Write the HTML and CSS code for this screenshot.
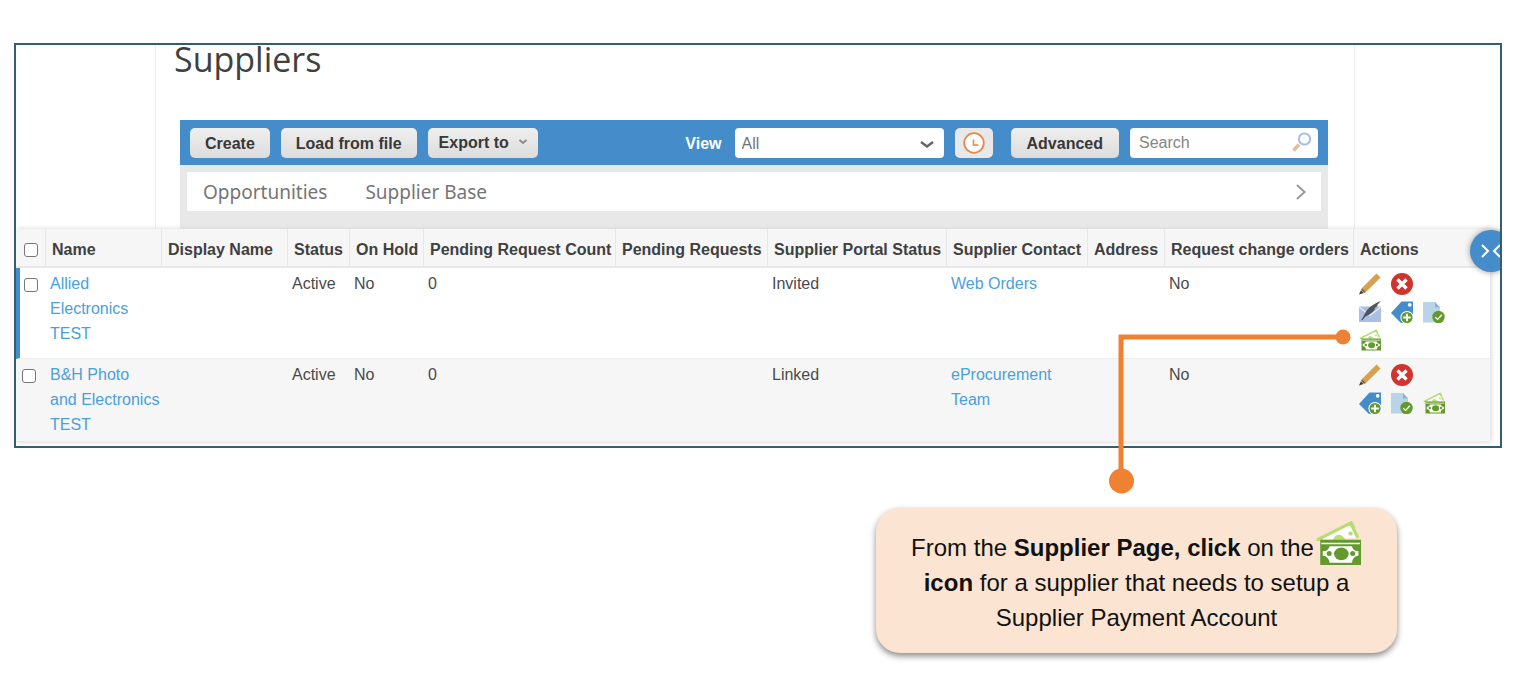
FILE: index.html
```html
<!DOCTYPE html>
<html lang="en">
<head>
<meta charset="utf-8">
<title>Suppliers</title>
<link rel="stylesheet" href="styles.css">
</head>
<body>
<svg class="defs" aria-hidden="true">
  <symbol id="pencil" viewBox="0 0 22 22">
    <path d="M17.5 0.5 21.6 4.6 7 19 3 15Z" fill="#d6a04e"/>
    <path d="M3 15 7 19 0 21.6Z" fill="#e3cfa4"/>
    <path d="M1.8 17.4 4.6 20 0 21.6Z" fill="#4a3d28"/>
    <path d="M3 15 7 19 5 19.8 2.2 17Z" fill="#7c6236"/>
  </symbol>
  <symbol id="remove" viewBox="0 0 22 22">
    <circle cx="11" cy="11" r="11" fill="#d0342c"/>
    <path d="M6.5 6.5 15.5 15.5M15.5 6.5 6.5 15.5" stroke="#fff" stroke-width="3.4" fill="none"/>
  </symbol>
  <symbol id="invite" viewBox="0 0 22 22">
    <path d="M0 5.5H22V21H0Z" fill="#a9bfe3"/>
    <path d="M0 6 11 14.5 22 6" stroke="#e4ecf8" stroke-width="1.3" fill="none"/>
    <path d="M22 0C15 2.500 8 7 5.500 13.500L2 19.500 3.500 19 6.500 15.500C11 13.500 14 11 16.500 7.500L15 7.800 19 4.500 18 4.200Z" fill="#50535a"/>
  </symbol>
  <symbol id="tag" viewBox="0 0 22 22">
    <path d="M0 12 10.5 0.5H22V14L12 22H10Z" fill="#448dca"/>
    <circle cx="18.7" cy="3.8" r="1.9" fill="#fff"/>
    <circle cx="16" cy="16.5" r="6.6" fill="#fff"/>
    <circle cx="16" cy="16.5" r="5.6" fill="#639a2b"/>
    <path d="M16 12.7V20.3M12.2 16.5H19.8" stroke="#fff" stroke-width="1.8"/>
  </symbol>
  <symbol id="approve" viewBox="0 0 22 22">
    <path d="M0 1H12L17 6.5V21.5H0Z" fill="#b9d4e7"/>
    <path d="M12 1 17 6.5H12Z" fill="#8fb0ca"/>
    <circle cx="15.5" cy="16" r="6.2" fill="#639a2b"/>
    <path d="M12.2 16.2 14.7 18.4 18.8 13.7" stroke="#fff" stroke-width="1.3" fill="none"/>
  </symbol>
  <symbol id="money" viewBox="0 0 22 22">
    <path d="M1 9.5 17 1.5 20.5 8.5" fill="#fff" stroke="#b6dc75" stroke-width="1.5"/>
    <path d="M0 9.8 3.6 8 3.6 10ZM14.5 2 17.7 0.5 19.5 4Z" fill="#b6dc75"/>
    <path d="M8.5 9.5Q11 4.5 14.8 9.5Z" fill="#b6dc75"/>
    <circle cx="17" cy="6.5" r="1" fill="#b6dc75"/>
    <path d="M2.5 9.5H22V21.5H2.5Z" fill="#639a2b"/>
    <path d="M7 12.5H17.7Q18 14.8 20.8 15V17Q18 17.3 17.7 20.5H7Q6.5 17.3 3.7 17V15Q6.5 14.8 7 12.5Z" fill="#fff"/>
    <path d="M3 11.2H21.5" stroke="#fff" stroke-width="0.7"/>
    <ellipse cx="12.6" cy="16.2" rx="3.5" ry="3" fill="#639a2b"/>
    <circle cx="6.8" cy="16" r="1.2" fill="#639a2b"/>
    <circle cx="18" cy="16" r="1.2" fill="#639a2b"/>
  </symbol>
</svg>
<main class="stage">
  <section class="frame">
    <div class="page">
      <h1 class="title">Suppliers</h1>
      <div class="toolbar">
        <button class="btn" type="button">Create</button>
        <button class="btn" type="button">Load from file</button>
        <button class="btn btn-menu" type="button">Export to
          <svg width="8" height="6" viewBox="0 0 8 6"><path d="M0.5 1 4 4 7.5 1" fill="none" stroke="#888" stroke-width="1.8"/></svg>
        </button>
        <div class="filters">
          <label class="view-label" for="view">View</label>
          <span class="select-wrap">
            <select id="view" class="field view"><option>All</option></select>
            <svg class="caret" width="14" height="8" viewBox="0 0 14 8"><path d="M1 1 7 5.5 13 1" fill="none" stroke="#666" stroke-width="2.4"/></svg>
          </span>
          <button class="btn btn-clock" type="button" aria-label="Recent">
            <svg width="22" height="22" viewBox="0 0 22 22"><circle cx="11" cy="11" r="9.8" fill="#fff" stroke="#e8884c" stroke-width="1.8"/><path d="M10.5 7.500V13H15.500" fill="none" stroke="#e8884c" stroke-width="1.6"/></svg>
          </button>
          <button class="btn btn-advanced" type="button">Advanced</button>
          <span class="search-wrap">
            <input class="field search" type="text" placeholder="Search" aria-label="Search">
            <svg class="lens" width="20" height="20" viewBox="0 0 20 20"><path d="M1.5 18.5 7 12.5" stroke="#dfbf98" stroke-width="3.6"/><circle cx="12.5" cy="7" r="5.6" fill="#fff" stroke="#a5bfe3" stroke-width="2"/></svg>
          </span>
        </div>
      </div>
      <div class="panel">
        <nav class="tabs">
          <a class="tab" href="#opportunities">Opportunities</a>
          <a class="tab" href="#supplier-base">Supplier Base</a>
          <button class="next" type="button" aria-label="Next">
            <svg width="10" height="16" viewBox="0 0 10 16"><path d="M1 1 8.5 8 1 15" fill="none" stroke="#999" stroke-width="2"/></svg>
          </button>
        </nav>
      </div>
    </div>
    <div class="table-area">
      <table class="grid">
        <colgroup>
          <col class="c-check"><col class="c-name"><col class="c-display"><col class="c-status"><col class="c-hold"><col class="c-count"><col class="c-pending"><col class="c-portal"><col class="c-contact"><col class="c-address"><col class="c-request"><col class="c-actions">
        </colgroup>
        <thead>
          <tr>
            <th><input class="box" type="checkbox" aria-label="Select all"></th>
            <th>Name</th><th>Display Name</th><th>Status</th><th>On Hold</th><th>Pending Request Count</th><th>Pending Requests</th><th>Supplier Portal Status</th><th>Supplier Contact</th><th>Address</th><th>Request change orders</th><th>Actions</th>
          </tr>
        </thead>
        <tbody>
          <tr class="selected">
            <td><input class="box" type="checkbox" aria-label="Select Allied Electronics TEST"></td>
            <td><a href="#allied">Allied<br>Electronics<br>TEST</a></td>
            <td></td><td>Active</td><td>No</td><td>0</td><td></td><td>Invited</td>
            <td><a href="#web-orders">Web Orders</a></td><td></td><td>No</td>
            <td>
              <div class="actions">
                <button class="icon" type="button" aria-label="Edit"><svg><use href="#pencil"/></svg></button>
                <button class="icon" type="button" aria-label="Remove"><svg><use href="#remove"/></svg></button>
                <span class="break"></span>
                <button class="icon" type="button" aria-label="Invite"><svg><use href="#invite"/></svg></button>
                <button class="icon" type="button" aria-label="Add tag"><svg><use href="#tag"/></svg></button>
                <button class="icon" type="button" aria-label="Approve"><svg><use href="#approve"/></svg></button>
                <button class="icon" type="button" aria-label="Payment account"><svg><use href="#money"/></svg></button>
              </div>
            </td>
          </tr>
          <tr class="striped">
            <td><input class="box" type="checkbox" aria-label="Select B&amp;H Photo and Electronics TEST"></td>
            <td><a href="#bh">B&amp;H Photo<br>and Electronics<br>TEST</a></td>
            <td></td><td>Active</td><td>No</td><td>0</td><td></td><td>Linked</td>
            <td><a href="#team">eProcurement<br>Team</a></td><td></td><td>No</td>
            <td>
              <div class="actions">
                <button class="icon" type="button" aria-label="Edit"><svg><use href="#pencil"/></svg></button>
                <button class="icon" type="button" aria-label="Remove"><svg><use href="#remove"/></svg></button>
                <span class="break"></span>
                <button class="icon" type="button" aria-label="Add tag"><svg><use href="#tag"/></svg></button>
                <button class="icon" type="button" aria-label="Approve"><svg><use href="#approve"/></svg></button>
                <button class="icon" type="button" aria-label="Payment account"><svg><use href="#money"/></svg></button>
              </div>
            </td>
          </tr>
        </tbody>
      </table>
      <button class="collapse" type="button" aria-label="Collapse table">
        <svg width="20" height="14" viewBox="0 0 20 14"><path d="M1 1 7 7 1 13M19 1 13 7 19 13" fill="none" stroke="#fff" stroke-width="2"/></svg>
      </button>
    </div>
  </section>
  <svg class="connector" width="242" height="166" viewBox="0 0 242 166">
    <path d="M234 9H12V154" fill="none" stroke="#ef8132" stroke-width="5"/>
    <circle cx="234" cy="9" r="7.5" fill="#ef8132"/>
    <circle cx="12.5" cy="153" r="12.5" fill="#ef8132"/>
  </svg>
  <p class="callout">From the <b>Supplier Page, click</b> on the<svg class="money-inline"><use href="#money"/></svg><br><b>icon</b> for a supplier that needs to setup a<br>Supplier Payment Account</p>
</main>
</body>
</html>
```

FILE: styles.css
```css
* { box-sizing: border-box; }

body {
  margin: 0;
  background: #fff;
  color: #4a4a4a;
  font: 16px/25px "Liberation Sans", Arial, sans-serif;
}

button, input, select { font: inherit; margin: 0; }
button { border: 0; padding: 0; cursor: pointer; }
a { color: #4a9fdc; text-decoration: none; }
.defs { position: absolute; width: 0; height: 0; }

.stage {
  position: relative;
  display: flex;
  flex-direction: column;
  padding: 43px 28px 40px 14px;
}

.frame {
  border: 2px solid #355d72;
  overflow: hidden;
  padding-bottom: 4px;
}

/* Page header and toolbar */
.page {
  margin: 0 145px 0 139px;
  padding: 0 26px 0 24px;
  border: solid #ececec;
  border-width: 0 1px;
}
.title {
  margin: 0 0 47px -6px;
  font: 34px/28px "Open Sans", "Noto Sans", sans-serif;
  color: #404040;
}
.toolbar {
  display: flex;
  align-items: center;
  gap: 11px;
  padding: 8px 10px 7px;
  background: #448dca;
}
.btn {
  height: 30px;
  padding: 0 15px;
  border-radius: 5px;
  background: linear-gradient(#efefef, #dcdcdc);
  color: #383838;
  font-weight: bold;
  white-space: nowrap;
}
.btn-menu {
  display: flex;
  align-items: center;
  gap: 10px;
  padding: 0 11px 2px;
}
.filters {
  display: flex;
  align-items: center;
  gap: 11px;
  margin-left: auto;
}
.view-label { margin-right: 2px; color: #fff; font-weight: bold; }
.select-wrap, .search-wrap { position: relative; display: flex; }
.field {
  height: 30px;
  border: 0;
  border-radius: 4px;
  background: #fff;
  color: #757575;
}
.view { width: 209px; padding: 0 7px; appearance: none; }
.caret { position: absolute; right: 10px; top: 13px; pointer-events: none; }
.btn-clock {
  display: flex;
  align-items: center;
  justify-content: center;
  width: 38px;
  padding: 0;
  background: #e8e8e8;
}
.btn-advanced { margin-left: 7px; padding: 0 16px; }
.search { width: 188px; padding: 0 36px 0 9px; }
.search::placeholder { color: #858585; opacity: 1; }
.lens { position: absolute; right: 6px; top: 4px; pointer-events: none; }

.panel { padding: 7px 7px 18px; background: #e8e8e8; }
.tabs {
  display: flex;
  align-items: center;
  gap: 38px;
  height: 39px;
  padding: 0 15px 0 16px;
  background: #fff;
}
.tab { color: #757575; font: 19px/26px "Noto Sans", "Open Sans", sans-serif; }
.next { display: flex; margin-left: auto; background: none; }

/* Supplier table */
.table-area {
  position: relative;
  padding-right: 10px;
  background: linear-gradient(#f6f6f6, #f6f6f6) 0 0 / 100% 38px no-repeat;
}
.grid {
  width: 100%;
  border-collapse: separate;
  border-spacing: 0;
  table-layout: fixed;
  box-shadow: 1px 0 5px #d5d5d5;
}
.c-check { width: 30px; }
.c-name { width: 116px; }
.c-status { width: 62px; }
.c-hold { width: 74px; }
.c-count { width: 192px; }
.c-pending { width: 152px; }
.c-portal { width: 179px; }
.c-contact { width: 141px; }
.c-address { width: 77px; }
.c-request { width: 189px; }
.c-actions { width: 136px; }

th {
  height: 39px;
  padding: 3px 0 0 6px;
  border-right: 1px solid #e7e7e7;
  border-bottom: 2px solid #e7e7e7;
  background: #f6f6f6;
  color: #404040;
  text-align: left;
  white-space: nowrap;
}
th:last-child { border-right: 0; }
td {
  height: 91px;
  padding: 3px 0 0 4px;
  border-bottom: 1px solid #ececec;
  background: #fff;
  vertical-align: top;
  white-space: nowrap;
}
.striped td { height: 83px; background: #f6f6f6; }
.selected td:first-child { border-left: 4px solid #448dca; }
.box {
  display: block;
  width: 14px;
  height: 14px;
  border: 1px solid #767676;
  border-radius: 3px;
  background: #fff;
  appearance: none;
}
th .box { margin: 2px 0 0 2px; }
td .box { margin: 7px 0 0 2px; }
.selected .box { margin-left: 0; }

.actions {
  display: flex;
  flex-wrap: wrap;
  gap: 6px 10px;
  width: 92px;
  padding-top: 2px;
  margin-left: 1px;
}
.icon { width: 22px; height: 22px; background: none; }
.icon svg { display: block; width: 22px; height: 22px; }
.break { width: 22px; }

.collapse {
  position: absolute;
  top: 1px;
  right: -12px;
  display: flex;
  align-items: center;
  justify-content: center;
  width: 42px;
  height: 42px;
  border-radius: 50%;
  background: #448dca;
  box-shadow: 0 0 6px #999;
}

/* Annotation */
.connector { position: absolute; top: 328px; right: 179px; }
.callout {
  align-self: flex-end;
  width: 521px;
  margin: 60px 105px 0 0;
  padding: 22px 16px 18px;
  border-radius: 24px;
  background: #fbe4d1;
  box-shadow: 0 3px 6px #888;
  color: #111;
  font: 24px/35px "Liberation Sans", Arial, sans-serif;
  text-align: center;
  white-space: nowrap;
}
.money-inline { width: 48px; height: 46px; margin: -16px 0 -6px; vertical-align: -4px; }
```
